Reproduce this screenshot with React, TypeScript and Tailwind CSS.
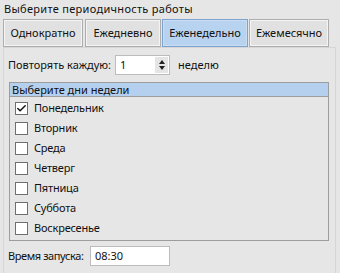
import { Check } from 'lucide-react';

const modes = [
  { label: 'Однократно', w: 'w-[80px]', active: false },
  { label: 'Ежедневно', w: 'w-[76px]', active: false },
  { label: 'Еженедельно', w: 'w-[86px]', active: true },
  { label: 'Ежемесячно', w: 'w-[80px]', active: false },
];

const days = [
  { name: 'Понедельник', checked: true },
  { name: 'Вторник', checked: false },
  { name: 'Среда', checked: false },
  { name: 'Четверг', checked: false },
  { name: 'Пятница', checked: false },
  { name: 'Суббота', checked: false },
  { name: 'Воскресенье', checked: false },
];

export default function App() {
  return (
    <div className="w-[340px] h-[273px] overflow-hidden whitespace-nowrap bg-[#e6e6e6] text-[11px] text-[#111] font-['Noto_Sans',sans-serif]">
      <div className="h-[19px] pl-[4px] pt-[2px] leading-[14px] tracking-[0.3px]">Выберите периодичность работы</div>

      {/* mode buttons */}
      <div className="flex h-[28px] pl-[3px] gap-[1px]">
        {modes.map((m, i) => (
          <div
            key={m.label}
            className={`${m.w} ${i === 1 ? 'ml-[1px]' : ''} h-full flex items-center justify-center border ${
              m.active
                ? 'bg-[#b7d3f0] border-[#7da2ce] shadow-[inset_0_0_0_1px_#c9def4]'
                : 'bg-[#e1e1e1] border-[#adadad] shadow-[inset_0_0_0_1px_#f4f4f4]'
            }`}
          >
            {m.label}
          </div>
        ))}
      </div>

      {/* panel */}
      <div className="ml-[3px] w-[333px] h-[300px] border border-[#d6d6d6] bg-[#e6e6e6] px-[4px]">
        <div className="flex items-center h-[20px] mt-[7px]">
          <span className="w-[107px]">Повторять каждую:</span>
          <div className="flex w-[55px] h-[20px] border border-[#bcbcbc] bg-white">
            <span className="flex-1 pl-[4px] leading-[18px]">1</span>
            <div className="w-[13px] my-[1px] mr-[1px] bg-[#e5e5e5] flex flex-col items-center justify-center gap-[2px]">
              <div className="w-0 h-0 border-l-[3px] border-r-[3px] border-b-[4px] border-l-transparent border-r-transparent border-b-[#222]" />
              <div className="w-0 h-0 border-l-[3px] border-r-[3px] border-t-[4px] border-l-transparent border-r-transparent border-t-[#222]" />
            </div>
          </div>
          <span className="ml-[8px]">неделю</span>
        </div>

        {/* days group */}
        <div className="mt-[7px] ml-[1px] w-[320px] border border-[#9d9d9d]">
          <div className="h-[14px] leading-[13px] pl-[2px] bg-[#b4d0ee] border-b border-[#9d9d9d]">Выберите дни недели</div>
          <div className="pt-[1px] pb-[2px]">
            {days.map((d) => (
              <div key={d.name} className="flex items-center h-[20px] pl-[5px]">
                <div className="w-[13px] h-[13px] border border-[#6f6f6f] bg-white flex items-center justify-center">
                  {d.checked && <Check size={11} strokeWidth={3.2} className="text-[#111]" />}
                </div>
                <span className="ml-[6px] tracking-[-0.2px]">{d.name}</span>
              </div>
            ))}
          </div>
        </div>

        <div className="flex items-center h-[20px] mt-[5px]">
          <span className="w-[82px] tracking-[-0.4px]">Время запуска:</span>
          <div className="w-[80px] h-[20px] border border-[#bcbcbc] bg-white pl-[4px] leading-[18px]">08:30</div>
        </div>
      </div>
    </div>
  );
}
